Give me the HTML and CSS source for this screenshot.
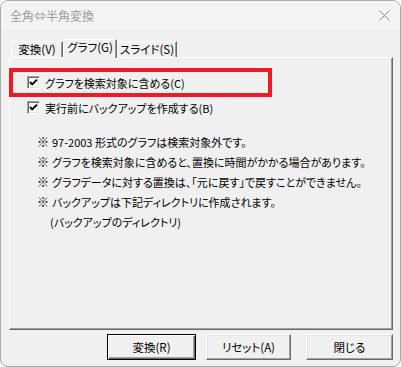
FILE: index.html
```html
<!DOCTYPE html>
<html lang="ja">
<head>
<meta charset="utf-8">
<title>全角⇔半角変換</title>
<link rel="stylesheet" href="styles.css">
</head>
<body>
<div class="window">
  <div class="titlebar">
    <span class="title">全角⇔半角変換</span>
    <span class="close">
      <svg width="11" height="11" viewBox="0 0 11 11"><path d="M0.5 0.5 L10.5 10.5 M10.5 0.5 L0.5 10.5" stroke="#8a8a8a" stroke-width="1" fill="none"/></svg>
    </span>
  </div>
  <div class="body">
    <div class="tabs">
      <div class="tab tab-first">変換(V)</div>
      <div class="tab tab-active">グラフ(G)</div>
      <div class="tab tab-last">スライド(S)</div>
    </div>
    <div class="panel">
      <div class="check highlight">
        <span class="box"><svg width="13" height="13" viewBox="0 0 13 13"><path d="M3 6 L5.2 8.4 L10 3.6" stroke="#000" stroke-width="2" fill="none"/></svg></span>
        <span class="label">グラフを検索対象に含める(C)</span>
      </div>
      <div class="check second">
        <span class="box"><svg width="13" height="13" viewBox="0 0 13 13"><path d="M3 6 L5.2 8.4 L10 3.6" stroke="#000" stroke-width="2" fill="none"/></svg></span>
        <span class="label">実行前にバックアップを作成する(B)</span>
      </div>
      <ul class="notes">
        <li><span class="mark">※</span><span>97-2003 形式のグラフは検索対象外です。</span></li>
        <li><span class="mark">※</span><span>グラフを検索対象に含めると、置換に時間がかかる場合があります。</span></li>
        <li><span class="mark">※</span><span>グラフデータに対する置換は、「元に戻す」で戻すことができません。</span></li>
        <li><span class="mark">※</span><span>バックアップは下記ディレクトリに作成されます。</span></li>
        <li class="sub"><span>(バックアップのディレクトリ)</span></li>
      </ul>
    </div>
    <div class="buttons">
      <button class="btn btn-default">変換(R)</button>
      <button class="btn btn-reset">リセット(A)</button>
      <button class="btn btn-close">閉じる</button>
    </div>
  </div>
</div>
</body>
</html>
```
FILE: styles.css
```css
html, body {
  margin: 0;
  padding: 0;
  background: #ffffff;
}

.window {
  width: 401px;
  height: 367px;
  box-sizing: border-box;
  border: 1px solid #a9a9a9;
  border-radius: 8px;
  background: #f0f0f0;
  overflow: hidden;
  font-family: "Noto Sans CJK JP", "Liberation Sans", sans-serif;
  font-size: 11px;
  font-feature-settings: "palt";
  color: #000;
}

.titlebar {
  height: 29px;
  background: #f3f3f3;
  display: flex;
  align-items: center;
  justify-content: space-between;
  padding: 0 10px 0 9px;
}

.title {
  color: #9c9c9c;
  font-size: 12px;
  font-feature-settings: normal;
}

.close {
  display: flex;
  width: 11px;
  height: 11px;
}

.body {
  padding: 9px 7px 0 8px;
}

.tabs {
  display: flex;
  align-items: flex-end;
  height: 18px;
}

.tab {
  box-sizing: border-box;
  height: 16px;
  border-top: 1px solid #ffffff;
  border-left: 1px solid #ffffff;
  border-right: 1px solid #696969;
  box-shadow: inset -1px 0 #a0a0a0;
  background: #f0f0f0;
  text-align: center;
  line-height: 15px;
  white-space: nowrap;
  font-size: 11.5px;
}

.tab-first {
  margin-left: 2px;
  width: 52px;
}

.tab-active {
  width: 54px;
  height: 19px;
  margin-bottom: -1px;
  position: relative;
  z-index: 1;
  line-height: 15px;
}

.tab-last {
  width: 60px;
}

.panel {
  box-sizing: border-box;
  height: 273px;
  border-top: 1px solid #ffffff;
  border-left: 1px solid #ffffff;
  border-right: 1px solid #696969;
  border-bottom: 1px solid #696969;
  box-shadow: inset -1px -1px #a0a0a0;
}

.check {
  display: flex;
  align-items: center;
  gap: 5px;
  white-space: nowrap;
}

.box {
  display: flex;
  width: 13px;
  height: 13px;
  box-sizing: border-box;
  background: #ffffff;
  border: 1px solid;
  border-color: #a0a0a0 #ffffff #ffffff #a0a0a0;
  box-shadow: inset 1px 1px #696969, inset -1px -1px #e3e3e3;
  position: relative;
}

.box svg {
  position: absolute;
  left: -1px;
  top: -1px;
}

.highlight {
  box-sizing: border-box;
  width: 263px;
  height: 29px;
  margin: 10px 0 0 -1px;
  border: 4px solid #ed1c24;
  padding-left: 14px;
}

.second {
  height: 19px;
  margin-top: 1px;
  padding-left: 17px;
}

.notes {
  list-style: none;
  margin: 15px 0 0;
  padding: 0 0 0 27px;
}

.notes li {
  display: flex;
  height: 20px;
  line-height: 20px;
  white-space: nowrap;
}

.mark {
  width: 15px;
  flex: none;
  font-size: 12px;
}

.notes .sub {
  padding-left: 13px;
}

.buttons {
  display: flex;
  justify-content: flex-end;
  margin-top: 4px;
}

.btn {
  box-sizing: border-box;
  height: 26px;
  padding: 0;
  margin: 0;
  font-family: inherit;
  font-size: 11.5px;
  font-feature-settings: "palt";
  color: #000;
  background: #f0f0f0;
  border: 1px solid;
  border-color: #ffffff #696969 #696969 #ffffff;
  box-shadow: inset -1px -1px #a0a0a0, inset 1px 1px #e3e3e3;
}

.btn-default {
  width: 89px;
  border-color: #000000;
  box-shadow: inset 1px 1px #ffffff, inset -1px -1px #696969, inset -2px -2px #a0a0a0;
}

.btn-reset {
  width: 85px;
  margin-left: 10px;
}

.btn-close {
  width: 87px;
  margin-left: 15px;
}
```
